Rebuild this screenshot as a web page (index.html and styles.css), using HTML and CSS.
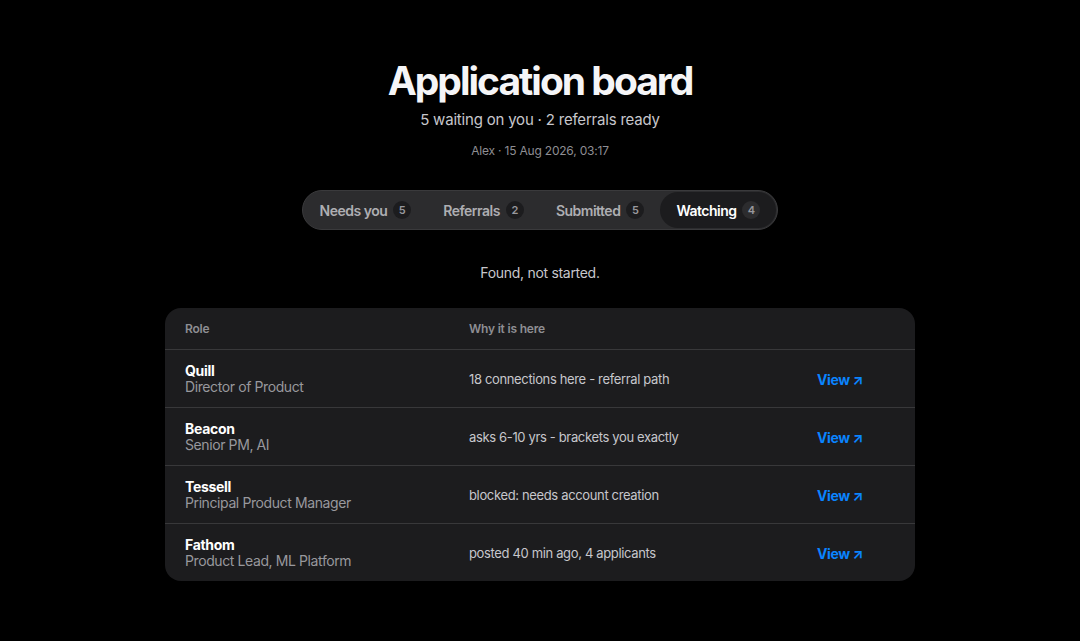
FILE: index.html
```html
<!DOCTYPE html>
<html lang="en">
<head>
    <meta charset="UTF-8">
    <meta name="viewport" content="width=device-width, initial-scale=1.0">
    <title>Application board</title>
    <link rel="stylesheet" href="styles.css">
</head>
<body>
    <header class="head">
        <h1>Application board</h1>
        <p class="summary">5 waiting on you · 2 referrals ready</p>
        <p class="meta">Alex · 15 Aug 2026, 03:17</p>
    </header>

    <nav class="tabs">
        <a class="tab">Needs you <span class="count">5</span></a>
        <a class="tab">Referrals <span class="count">2</span></a>
        <a class="tab">Submitted <span class="count">5</span></a>
        <a class="tab active">Watching <span class="count">4</span></a>
    </nav>

    <p class="note">Found, not started.</p>

    <div class="board">
        <div class="row header">
            <div>Role</div>
            <div>Why it is here</div>
            <div></div>
        </div>
        <div class="row">
            <div class="role"><b>Quill</b><span>Director of Product</span></div>
            <div class="why">18 connections here - referral path</div>
            <div><a class="view">View ↗</a></div>
        </div>
        <div class="row">
            <div class="role"><b>Beacon</b><span>Senior PM, AI</span></div>
            <div class="why">asks 6-10 yrs - brackets you exactly</div>
            <div><a class="view">View ↗</a></div>
        </div>
        <div class="row">
            <div class="role"><b>Tessell</b><span>Principal Product Manager</span></div>
            <div class="why">blocked: needs account creation</div>
            <div><a class="view">View ↗</a></div>
        </div>
        <div class="row">
            <div class="role"><b>Fathom</b><span>Product Lead, ML Platform</span></div>
            <div class="why">posted 40 min ago, 4 applicants</div>
            <div><a class="view">View ↗</a></div>
        </div>
    </div>
</body>
</html>
```
FILE: styles.css
```css
body {
    font-family: Inter, 'Noto Sans', sans-serif;
    margin: 0;
    padding: 0;
    background: #000;
    color: #f5f5f7;
}

.head {
    text-align: center;
    padding-top: 57px;
}

.head h1 {
    font-size: 39px;
    font-weight: 700;
    letter-spacing: -2px;
    line-height: 48px;
    margin: 0;
}

.summary {
    font-size: 15px;
    color: #c7c7cc;
    margin: 4px 0 0;
    line-height: 22px;
    letter-spacing: -0.2px;
}

.meta {
    font-size: 12px;
    color: #8e8e93;
    margin: 12px 0 0;
    line-height: 16px;
    letter-spacing: -0.2px;
}

.tabs {
    display: flex;
    width: max-content;
    margin: 31px auto 0;
    padding: 1px;
    background: #2c2c2e;
    border: 1px solid #3a3a3c;
    border-radius: 21px;
}

.tab {
    display: flex;
    align-items: center;
    gap: 6px;
    height: 36px;
    padding: 0 16px;
    border-radius: 18px;
    font-size: 14px;
    font-weight: 600;
    color: #aeaeb2;
    letter-spacing: -0.5px;
}

.tab.active {
    background: #1c1c1e;
    color: #fff;
}

.count {
    display: inline-flex;
    align-items: center;
    justify-content: center;
    width: 18px;
    height: 18px;
    border-radius: 50%;
    background: #1c1c1e;
    color: #98989d;
    font-size: 11px;
    font-weight: 600;
    letter-spacing: 0;
}

.tab.active .count {
    background: #2c2c2e;
}

.note {
    text-align: center;
    font-size: 14px;
    color: #c7c7cc;
    margin: 33px 0 0;
    line-height: 20px;
    letter-spacing: -0.3px;
}

.board {
    width: 750px;
    margin: 25px auto 0;
    background: #1c1c1e;
    border-radius: 16px;
    overflow: hidden;
}

.row {
    display: grid;
    grid-template-columns: 284px 348px 1fr;
    align-items: center;
    padding: 0 20px;
    height: 57px;
    border-top: 1px solid #38383a;
}

.row.header {
    height: 41px;
    border-top: none;
    font-size: 12px;
    font-weight: 600;
    color: #8e8e93;
    letter-spacing: -0.2px;
}

.role {
    display: flex;
    flex-direction: column;
    font-size: 14px;
    line-height: 16px;
    letter-spacing: -0.3px;
}

.role b {
    font-weight: 700;
    color: #fff;
}

.role span {
    color: #98989d;
    letter-spacing: -0.4px;
}

.why {
    font-size: 13px;
    color: #c7c7cc;
    letter-spacing: -0.35px;
}

.view {
    font-size: 14px;
    font-weight: 700;
    color: #0a84ff;
    letter-spacing: -0.4px;
}
```
